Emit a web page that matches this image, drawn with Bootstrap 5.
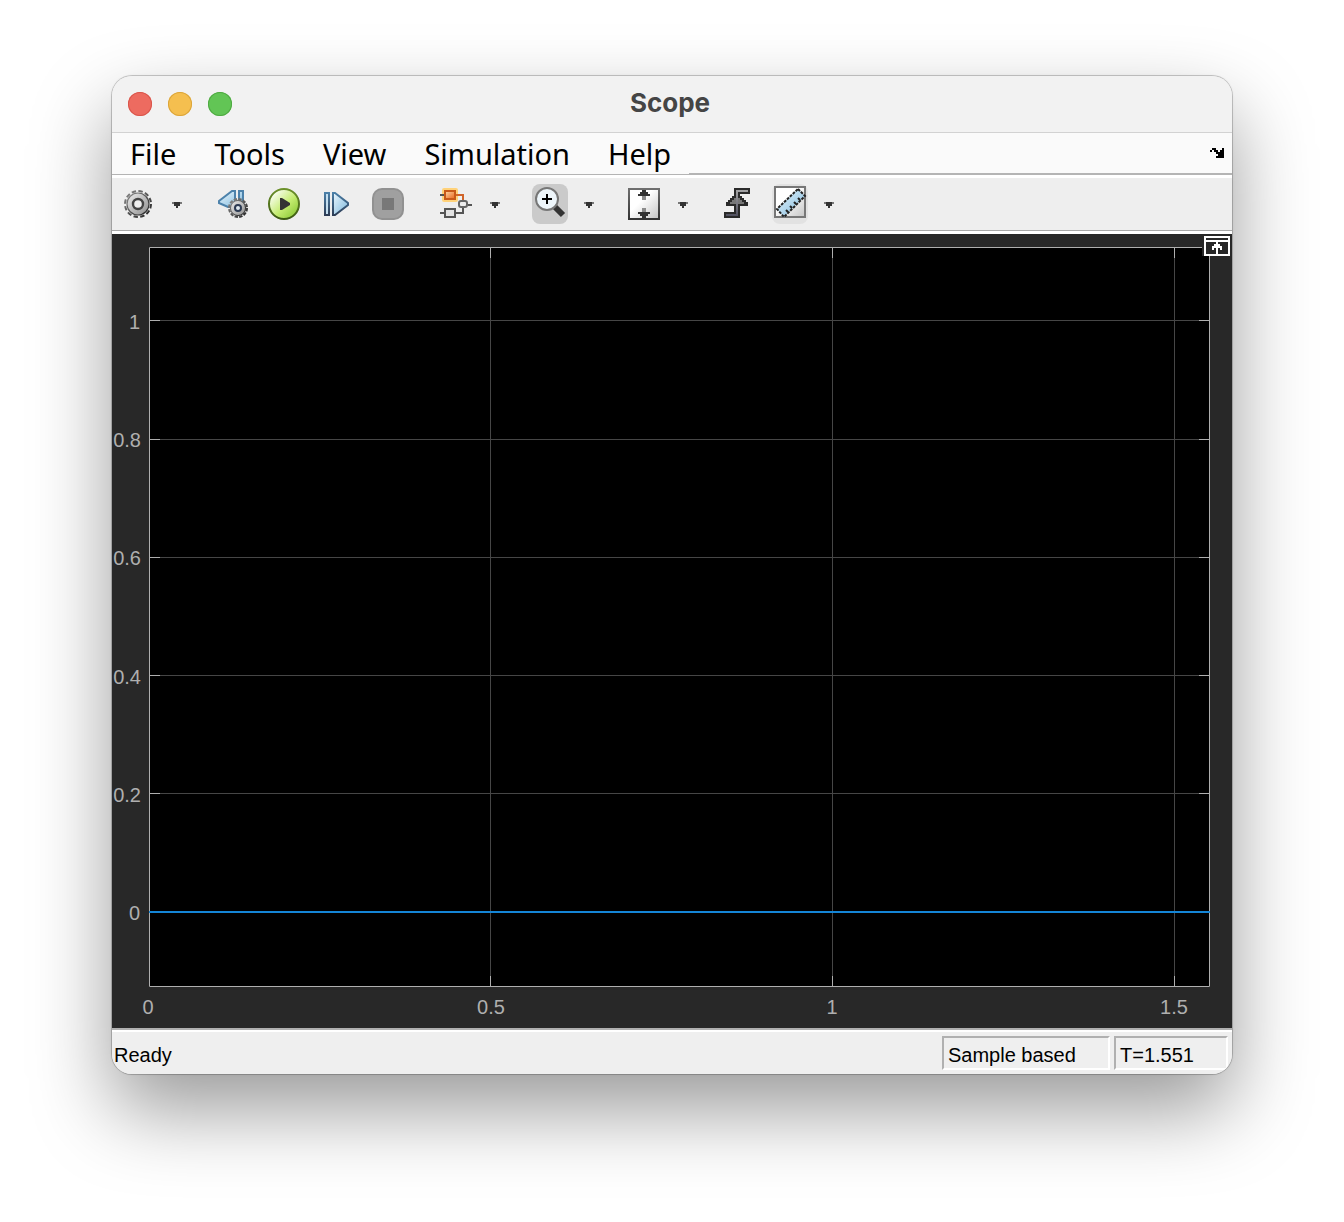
<!DOCTYPE html>
<html lang="en">
<head>
<meta charset="utf-8">
<meta name="viewport" content="width=device-width, initial-scale=1">
<title>Scope</title>
<link href="https://cdn.jsdelivr.net/npm/bootstrap@5.3.0/dist/css/bootstrap.min.css" rel="stylesheet">
<style>
  body { background: #fff; padding: 76px 112px 148px; font-family: "Liberation Sans", Arial, sans-serif; font-size: 20px; line-height: 24px; color: #000; }
  svg { display: block; overflow: visible; }
  button { border: 0; padding: 0; background: none; color: inherit; }
  .scope-window { border-radius: 20px; background: #efefef; box-shadow: 0 0 0 1px rgba(0,0,0,.18), 0 0 3px rgba(0,0,0,.1), 0 36px 80px rgba(0,0,0,.4); }
  .clip { border-radius: 20px; overflow: hidden; }
  .titlebar { height: 57px; background: #f2f2f2; border-bottom: 1px solid #d2d2d2; padding: 0 4px 2px 0; }
  .titlebar h1 { font: 700 26px/32px Inter, sans-serif; color: #454545; }
  .lights { left: 16px; top: 16px; gap: 16px; }
  .light { width: 24px; height: 24px; border-radius: 50%; }
  .light-close { background: #ed6b60; box-shadow: inset 0 0 0 1px #d9564c; }
  .light-min { background: #f5bf4f; box-shadow: inset 0 0 0 1px #dba53a; }
  .light-max { background: #62c555; box-shadow: inset 0 0 0 1px #4fa942; }
  .menubar { height: 42px; background: #fafafa; }
  .menus { border-bottom: 1px solid #b4b4b4; }
  .menus a { padding: 0 18px; font: 29px/41px "Noto Sans", sans-serif; color: #000; text-decoration: none; }
  .menus { gap: 2px; }
  .menu-rest { border-bottom: 2px solid #b4b4b4; padding: 0 8px 0; }
  .toolbar { height: 59px; background: #eee; border-top: 3px solid #fff; border-bottom: 3px solid #fff; padding: 0 8px 2px; gap: 27px; box-shadow: inset 0 -1px #a8a8a8; }
  .tools { gap: 16px; }
  .split { gap: 11px; }
  .run-tools { padding-right: 5px; }
  .tool { width: 36px; height: 40px; border-radius: 8px; display: flex; align-items: center; justify-content: center; }
  .tool.active { background: #cacaca; }
  .tool.soft { background: #e2e2e2; }
  .drop { width: 20px; height: 40px; display: flex; align-items: center; justify-content: center; padding-top: 2px; }
  .plot { background: #282828; }
  .plot svg text { fill: #afafaf; font-size: 20px; }
  .undock { right: 2px; top: 2px; }
  .statusbar { height: 46px; background: #efefef; border-top: 2px solid #b0b0b0; padding: 2px 4px 0 2px; gap: 4px; box-shadow: inset 0 2px #fff; }
  .cell { height: 34px; border: 2px solid; border-color: #b0b0b0 #fff #fff #b0b0b0; padding: 5px 4px 0; }
  .cell-mode { width: 168px; }
  .cell-time { width: 114px; }
</style>
<script src="https://cdn.jsdelivr.net/npm/bootstrap@5.3.0/dist/js/bootstrap.bundle.min.js"></script>
</head>
<body>
<svg width="0" height="0" class="position-absolute" aria-hidden="true">
  <defs>
    <symbol id="caret" viewBox="0 0 5 3"><path fill="#777" d="M0 0h5v1H0z"/><path fill="#333" d="M1 0h3v1H1zM1 1h3v1H1zM2 2h1v1H2z"/></symbol>
    <linearGradient id="green" x1="0" y1="0" x2="1" y2="1"><stop offset=".1" stop-color="#fff"/><stop offset=".55" stop-color="#c4ec70"/><stop offset="1" stop-color="#7cc026"/></linearGradient>
    <linearGradient id="rim" x1="0" y1="0" x2="0" y2="1"><stop stop-color="#6c912a"/><stop offset="1" stop-color="#3c5a12"/></linearGradient>
    <linearGradient id="navy" gradientUnits="userSpaceOnUse" x1="0" y1="2" x2="0" y2="14"><stop stop-color="#4c82ab"/><stop offset="1" stop-color="#2c3a52"/></linearGradient>
    <linearGradient id="sky" x1="0" y1="0" x2="1" y2="1"><stop stop-color="#eaf6fd"/><stop offset="1" stop-color="#7db8dc"/></linearGradient>
    <linearGradient id="metal" x1="0" y1="0" x2="1" y2="1"><stop stop-color="#f0f0f0"/><stop offset="1" stop-color="#8c8c8c"/></linearGradient>
    <linearGradient id="teeth" x1="0" y1="0" x2="1" y2="1"><stop stop-color="#8a8a8a"/><stop offset="1" stop-color="#222"/></linearGradient>
    <linearGradient id="paper" x1="0" y1="0" x2="1" y2="1"><stop offset=".4" stop-color="#fff"/><stop offset="1" stop-color="#c4c4c4"/></linearGradient>
    <linearGradient id="frame" x1="0" y1="0" x2="0" y2="1"><stop stop-color="#6e6e6e"/><stop offset="1" stop-color="#333"/></linearGradient>
    <linearGradient id="orange" x1="0" y1="0" x2="1" y2="1"><stop stop-color="#ffd9a8"/><stop offset="1" stop-color="#e8641c"/></linearGradient>
    <linearGradient id="steel" gradientUnits="userSpaceOnUse" x1="0" y1="0" x2="0" y2="15"><stop stop-color="#aaa"/><stop offset="1" stop-color="#4a4a5a"/></linearGradient>
  </defs>
</svg>

<main class="scope-window"><div class="clip">
  <header class="titlebar position-relative d-flex justify-content-center align-items-center">
    <div class="lights position-absolute d-flex">
      <button type="button" class="light light-close" aria-label="Close"></button>
      <button type="button" class="light light-min" aria-label="Minimize"></button>
      <button type="button" class="light light-max" aria-label="Zoom window"></button>
    </div>
    <h1 class="m-0">Scope</h1>
  </header>

  <nav class="menubar d-flex" aria-label="Menu">
    <div class="menus d-flex"><a href="#">File</a><a href="#">Tools</a><a href="#">View</a><a href="#">Simulation</a><a href="#">Help</a></div>
    <div class="menu-rest flex-grow-1 d-flex justify-content-end align-items-center">
      <button type="button" aria-label="Dock"><svg width="14" height="10" viewBox="0 0 7 5"><path d="M1 0h2v1H1zM6 0h1v5H6zM0 1h1v1H0zM2 1h2v1H2zM3 2h4v1H3zM5 1h2v1H5zM4 3h3v1H4zM3 4h4v1H3z"/></svg></button>
    </div>
  </nav>

  <div class="toolbar d-flex align-items-center" role="toolbar" aria-label="Tools">
    <div class="split d-flex">
      <button type="button" class="tool" aria-label="Configuration"><svg width="32" height="32" viewBox="0 0 16 16"><circle cx="8" cy="8" r="6.500" fill="none" stroke="url(#teeth)" stroke-dasharray="2.200 1.203"/><circle cx="8" cy="8" r="5.500" fill="url(#metal)" stroke="url(#teeth)" stroke-width=".6"/><circle cx="8" cy="8" r="2.500" fill="#eee" stroke="#444" stroke-width="1.200"/></svg></button>
      <button type="button" class="drop" aria-label="Configuration options"><svg width="10" height="6"><use href="#caret"/></svg></button>
    </div>
    <div class="tools run-tools d-flex">
      <button type="button" class="tool" aria-label="Step back options"><svg width="32" height="32" viewBox="0 0 16 16"><path fill="url(#sky)" stroke="#4c82ab" d="M9.500 1.500v8H6L1.500 7.500V6.500L8 1.500zM11.500 1.500h2v7h-2z"/><circle cx="11" cy="10" r="4.500" fill="none" stroke="url(#teeth)" stroke-dasharray="1.700 .656"/><circle cx="11" cy="10" r="3.800" fill="url(#metal)" stroke="url(#teeth)" stroke-width=".6"/><circle cx="11" cy="10" r="1.500" fill="#dfe9f0" stroke="#2c3a52"/></svg></button>
      <button type="button" class="tool" aria-label="Run"><svg width="32" height="32" viewBox="0 0 16 16"><circle cx="8" cy="8" r="7.500" fill="url(#green)" stroke="url(#rim)"/><path fill="#333" d="M6 5h1l4 2.500v1L7 11H6z"/></svg></button>
      <button type="button" class="tool" aria-label="Step forward"><svg width="32" height="32" viewBox="0 0 16 16" stroke="url(#navy)"><path fill="#c4dff0" d="M2.500 2.500h2v11h-2z"/><path fill="url(#sky)" d="M6.500 2.500h1l6.500 5v1l-6.500 5h-1z"/></svg></button>
      <button type="button" class="tool" aria-label="Stop"><svg width="32" height="32" viewBox="0 0 16 16"><rect width="16" height="16" rx="5" fill="#919191"/><rect x="1" y="1" width="14" height="14" rx="4" fill="#a0a0a0"/><path fill="#787878" d="M5 5h6v6H5z"/></svg></button>
    </div>
    <div class="split d-flex">
      <button type="button" class="tool" aria-label="Highlight block"><svg width="32" height="32" viewBox="0 0 16 16"><rect x="1" width="8" height="7" rx="1" fill="#ffd27a"/><path fill="url(#orange)" stroke="#c8591a" d="M2.500 1.500h5v4h-5z"/><path fill="none" stroke="#d0642a" d="M8 3.500h3.500V6"/><path fill="none" stroke="#555" d="M0 3.500h2M0 12.500h2M8 12.500h3.500V10M14 8.500h2"/><path fill="#e4e4e4" stroke="#555" d="M2.500 10.500h5v4h-5z"/><rect x="9.500" y="6.500" width="4" height="3" rx="1" fill="#eee" stroke="#666"/></svg></button>
      <button type="button" class="drop" aria-label="Highlight options"><svg width="10" height="6"><use href="#caret"/></svg></button>
    </div>
    <div class="split d-flex">
      <button type="button" class="tool active" aria-label="Zoom"><svg width="32" height="32" viewBox="0 0 16 16"><path stroke="#777" stroke-width="2" d="M10 9l2 2"/><path stroke="#333" stroke-width="3" d="M10.500 9.500l4 4"/><circle cx="6.500" cy="5.500" r="5.500" fill="#edf5fa" stroke="#777"/><path d="M6 3h1v5H6zM4 5h5v1H4z"/></svg></button>
      <button type="button" class="drop" aria-label="Zoom options"><svg width="10" height="6"><use href="#caret"/></svg></button>
    </div>
    <div class="split d-flex">
      <button type="button" class="tool" aria-label="Scale axes"><svg width="32" height="32" viewBox="0 0 16 16"><rect x=".5" y=".5" width="15" height="15" fill="url(#paper)" stroke="url(#frame)"/><path fill="#333" d="M7 1h2v1h1v1h1v1H9v1H7V4H5V3h1V2h1zM7 15h2v-1h1v-1h1v-1H9v-1H7v1H5v1h1v1h1z"/><path fill="#8c8c8c" d="M7 4h2v2H7zM7 10h2v2H7z"/></svg></button>
      <button type="button" class="drop" aria-label="Scale options"><svg width="10" height="6"><use href="#caret"/></svg></button>
    </div>
    <div class="tools d-flex">
      <button type="button" class="tool" aria-label="Triggers"><svg width="32" height="32" viewBox="0 0 16 16"><path fill="none" stroke="#2a2a2a" stroke-width="3" d="M14 1.500H7.500v12H1"/><path fill="#2a2a2a" d="M6 3h3v1h1v1h1v1h1v1h1v2H2V7h1V6h1V5h1V4h1z"/><path fill="#777" d="M6 5h3v1h1v1h1v1H4V7h1V6h1z"/><path fill="none" stroke="url(#steel)" d="M13 1.500H7.500v12H2"/></svg></button>
      <div class="split d-flex">
        <button type="button" class="tool soft" aria-label="Measurements"><svg width="32" height="32" viewBox="0 1 16 16"><rect x=".5" y=".5" width="15" height="15" fill="url(#paper)" stroke="#777"/><path fill="url(#sky)" stroke="#222" stroke-dasharray="1.400 .6" d="M12 1.500L15.500 5 5 15.500 1.500 11.500z"/><path stroke="#222" d="M6 12l1 1M8 10l1 1M10 8l1 1M12 6l1 1"/></svg></button>
        <button type="button" class="drop" aria-label="Measurement options"><svg width="10" height="6"><use href="#caret"/></svg></button>
      </div>
    </div>
  </div>

  <section class="plot position-relative" aria-label="Plot">
    <svg class="w-100 h-auto" viewBox="0 0 1120 794">
      <path d="M37 13h1061v740H37z"/>
      <path fill="none" stroke="#464646" d="M38 86.500h1059M38 205.500h1059M38 323.500h1059M38 441.500h1059M38 559.500h1059M378.500 14v738M720.500 14v738M1062.500 14v738"/>
      <path fill="none" stroke="#afafaf" d="M37.500 13.500h1060v739h-1060zM38 86.500h10M38 205.500h10M38 323.500h10M38 441.500h10M38 559.500h10M1087 86.500h10M1087 205.500h10M1087 323.500h10M1087 441.500h10M1087 559.500h10M378.500 14v10M720.500 14v10M1062.500 14v10M378.500 742v10M720.500 742v10M1062.500 742v10"/>
      <path stroke="#1485d6" stroke-width="2" d="M37 678h1061"/>
      <g text-anchor="end"><text x="28" y="95">1</text><text x="29" y="213">0.8</text><text x="29" y="331">0.6</text><text x="29" y="450">0.4</text><text x="29" y="568">0.2</text><text x="28" y="686">0</text></g>
      <g text-anchor="middle"><text x="36" y="780">0</text><text x="379" y="780">0.5</text><text x="720" y="780">1</text><text x="1062" y="780">1.5</text></g>
    </svg>
    <button type="button" class="undock position-absolute" aria-label="Maximize axes"><svg width="26" height="20"><path fill="#282828" d="M-2 0h28v20H-2z"/><path fill="#fff" fill-rule="evenodd" d="M0 0h26v20H0zM2 2v2h22V2zM2 6v12h22V6z"/><path fill="#fff" d="M12 6h2v2h2v2h2v4h-2v-2h-2v6h-2v-6h-2v2H8v-4h2V8h2z"/></svg></button>
  </section>

  <footer class="statusbar d-flex align-items-center">
    <span class="me-auto pt-1">Ready</span>
    <div class="cell cell-mode">Sample based</div>
    <div class="cell cell-time">T=1.551</div>
  </footer>
</div></main>
</body>
</html>
